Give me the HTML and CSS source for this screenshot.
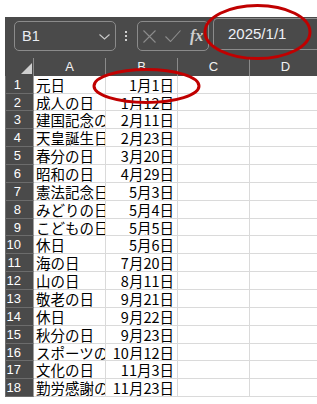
FILE: index.html
```html
<!DOCTYPE html>
<html lang="ja">
<head>
  <meta charset="UTF-8">
  <meta name="viewport" content="width=device-width, initial-scale=1.0">
  <title>祝日一覧</title>
  <link rel="stylesheet" href="styles.css">
</head>
<body>
  <div class="app">
    <!-- Formula bar -->
    <div class="toolbar">
      <div class="namebox">
        <span class="ref">B1</span>
        <svg class="chevron" width="11" height="6" viewBox="0 0 11 6"><path d="M0.5 0.5 L5.5 5 L10.5 0.5" fill="none" stroke="#c9c9c9" stroke-width="1.1"/></svg>
      </div>
      <div class="dots"><i></i><i></i><i></i></div>
      <div class="fxbox">
        <svg width="13" height="13" viewBox="0 0 13 13"><path d="M0.5 0.5 L12.5 12.5 M12.5 0.5 L0.5 12.5" stroke="#8d8d8d" stroke-width="1.1"/></svg>
        <svg class="check" width="16" height="12" viewBox="0 0 16 12"><path d="M0.5 6.5 L5.5 11.5 L15.5 0.5" fill="none" stroke="#8d8d8d" stroke-width="1.1"/></svg>
        <span class="fx">fx</span>
      </div>
      <div class="formula">2025/1/1</div>
    </div>

    <!-- Sheet -->
    <div class="sheet">
      <div class="corner"><svg width="11" height="11" viewBox="0 0 11 11"><path d="M11 0 L11 11 L0 11 Z" fill="#cfcfcf"/></svg></div>
      <div class="colhead">A</div>
      <div class="colhead">B</div>
      <div class="colhead">C</div>
      <div class="colhead">D</div>

      <div class="rowhead">1</div><div class="cell">元日</div><div class="cell date">1月1日</div><div class="cell"></div><div class="cell"></div>
      <div class="rowhead">2</div><div class="cell">成人の日</div><div class="cell date">1月12日</div><div class="cell"></div><div class="cell"></div>
      <div class="rowhead">3</div><div class="cell">建国記念の日</div><div class="cell date">2月11日</div><div class="cell"></div><div class="cell"></div>
      <div class="rowhead">4</div><div class="cell">天皇誕生日</div><div class="cell date">2月23日</div><div class="cell"></div><div class="cell"></div>
      <div class="rowhead">5</div><div class="cell">春分の日</div><div class="cell date">3月20日</div><div class="cell"></div><div class="cell"></div>
      <div class="rowhead">6</div><div class="cell">昭和の日</div><div class="cell date">4月29日</div><div class="cell"></div><div class="cell"></div>
      <div class="rowhead">7</div><div class="cell">憲法記念日</div><div class="cell date">5月3日</div><div class="cell"></div><div class="cell"></div>
      <div class="rowhead">8</div><div class="cell">みどりの日</div><div class="cell date">5月4日</div><div class="cell"></div><div class="cell"></div>
      <div class="rowhead">9</div><div class="cell">こどもの日</div><div class="cell date">5月5日</div><div class="cell"></div><div class="cell"></div>
      <div class="rowhead">10</div><div class="cell">休日</div><div class="cell date">5月6日</div><div class="cell"></div><div class="cell"></div>
      <div class="rowhead">11</div><div class="cell">海の日</div><div class="cell date">7月20日</div><div class="cell"></div><div class="cell"></div>
      <div class="rowhead">12</div><div class="cell">山の日</div><div class="cell date">8月11日</div><div class="cell"></div><div class="cell"></div>
      <div class="rowhead">13</div><div class="cell">敬老の日</div><div class="cell date">9月21日</div><div class="cell"></div><div class="cell"></div>
      <div class="rowhead">14</div><div class="cell">休日</div><div class="cell date">9月22日</div><div class="cell"></div><div class="cell"></div>
      <div class="rowhead">15</div><div class="cell">秋分の日</div><div class="cell date">9月23日</div><div class="cell"></div><div class="cell"></div>
      <div class="rowhead">16</div><div class="cell">スポーツの日</div><div class="cell date">10月12日</div><div class="cell"></div><div class="cell"></div>
      <div class="rowhead">17</div><div class="cell">文化の日</div><div class="cell date">11月3日</div><div class="cell"></div><div class="cell"></div>
      <div class="rowhead">18</div><div class="cell">勤労感謝の日</div><div class="cell date">11月23日</div><div class="cell"></div><div class="cell"></div>
    </div>
  </div>

  <!-- Red annotation circles -->
  <svg class="marks" width="317" height="404" viewBox="0 0 317 404">
    <ellipse cx="257.5" cy="32" rx="52.5" ry="26.5" fill="none" stroke="#c00000" stroke-width="3"/>
    <ellipse cx="146.5" cy="86" rx="52.5" ry="16.5" fill="none" stroke="#c00000" stroke-width="3"/>
  </svg>
</body>
</html>
```

FILE: styles.css
```css
html, body {
  margin: 0;
  overflow: hidden;
  background: #fff;
}
body {
  position: relative;
  width: 317px;
  height: 404px;
}
.app {
  margin: 17px 0 0 5px;
  width: 317px;
  background-color: #4a4a4a;
}

/* formula bar */
.toolbar {
  display: flex;
  align-items: flex-start;
  height: 41px;
  padding-left: 9px;
}
.namebox {
  margin-top: 4px;
  width: 102px;
  height: 30px;
  box-sizing: border-box;
  border: 1px solid #8b8b8b;
  border-radius: 5px;
  display: flex;
  align-items: center;
  justify-content: space-between;
  padding: 0 5px 0 7px;
}
.ref {
  font: 14.5px "Liberation Sans", Arial, sans-serif;
  color: #e9ecf2;
}
.chevron {
  margin-top: 2px;
}
.dots {
  margin: 14px 0 0 9px;
  display: flex;
  flex-direction: column;
  gap: 2px;
}
.dots i {
  width: 2px;
  height: 2px;
  background-color: #cfcfcf;
}
.fxbox {
  margin: 4px 0 0 10px;
  width: 72px;
  height: 30px;
  box-sizing: border-box;
  border: 1px solid #8b8b8b;
  border-radius: 5px;
  display: flex;
  align-items: center;
  padding-left: 5px;
}
.check {
  margin-left: 9px;
}
.fx {
  margin-left: 9px;
  font: italic bold 16px "Liberation Serif", serif;
  color: #cfcfcf;
}
.formula {
  margin: 1px 0 0 4px;
  flex: 1;
  height: 32px;
  box-sizing: border-box;
  border: 1px solid #8b8b8b;
  border-right: none;
  border-radius: 5px 0 0 5px;
  padding-left: 14px;
  font: 15px "Liberation Sans", Arial, sans-serif;
  line-height: 30px;
  color: #eef0f6;
}

/* sheet grid */
.sheet {
  display: grid;
  grid-template-columns: 29px repeat(4, 72px);
  grid-template-rows: 17.7px;
  grid-auto-rows: 17.87px;
}
.corner, .colhead {
  background-color: #4a4a4a;
  border-right: 1px solid #8a8a8a;
  box-sizing: border-box;
}
.corner {
  display: flex;
  align-items: flex-end;
  justify-content: flex-end;
  padding: 0 1px 2px 0;
}
.colhead {
  text-align: center;
  font: 13px "Liberation Sans", Arial, sans-serif;
  line-height: 18px;
  color: #f2f2f2;
}
.rowhead {
  background-color: #4a4a4a;
  border-left: 1px solid #6f6f6f;
  border-bottom: 1px solid #6c6c6c;
  border-right: 1px solid #a0a0a0;
  box-sizing: border-box;
  text-align: right;
  padding-right: 12px;
  font: 13px "Liberation Sans", Arial, sans-serif;
  line-height: 17px;
  color: #fff;
}
.cell {
  background-color: #fff;
  border-right: 1px solid #dadada;
  border-bottom: 1px solid #dadada;
  box-sizing: border-box;
  padding: 0 2px;
  overflow: hidden;
  white-space: nowrap;
  font: 14.5px "Noto Sans CJK JP", sans-serif;
  line-height: 17px;
  color: #000;
}
.cell.date {
  text-align: right;
  padding-right: 3px;
}

.marks {
  position: absolute;
  top: 0;
  left: 0;
  pointer-events: none;
}
```
